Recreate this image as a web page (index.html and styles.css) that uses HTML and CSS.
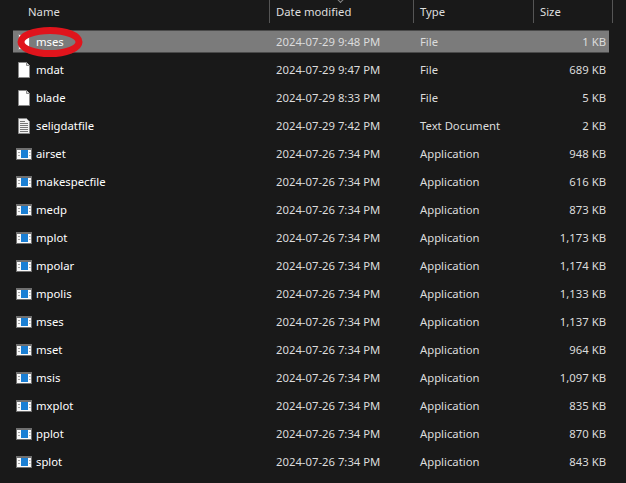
FILE: index.html
```html
<!DOCTYPE html>
<html lang="en">
<head>
<meta charset="utf-8">
<title>Files</title>
<link rel="stylesheet" href="styles.css">
</head>
<body>
<svg width="0" height="0" class="defs">
  <defs>
    <symbol id="doc" viewBox="0 0 16 16">
      <path d="M2.500 .5h8l3 3v12h-11z" fill="#fff" stroke="#8a8a8a"/>
      <path d="M10.500 .5v3h3" fill="#ddd" stroke="#8a8a8a"/>
    </symbol>
    <symbol id="txt" viewBox="0 0 16 16">
      <path d="M2.500 .5h8l3 3v12h-11z" fill="#f2f2f2" stroke="#8a8a8a"/>
      <path d="M4 3.500h5M4 5.500h8M4 7.500h8M4 9.500h8M4 11.500h8M4 13.500h8" stroke="#777"/>
    </symbol>
    <symbol id="app" viewBox="0 0 16 16">
      <rect y="2" width="16" height="12" fill="#707070"/>
      <rect x="1" y="4" width="14" height="9" fill="#fafafa"/>
      <rect x="5" y="4" width="7" height="8" fill="#1a7fd4"/>
      <path d="M2 6.500h2M2 9.500h2M13 6.500h1.500M13 9.500h1.500" stroke="#a8a8a8"/>
    </symbol>
  </defs>
</svg>
<main class="list">
  <header class="head">
    <div class="hcell hname">Name</div>
    <div class="hcell hdate">Date modified<span class="sort"></span></div>
    <div class="hcell htype">Type</div>
    <div class="hcell hsize">Size</div>
  </header>
  <div class="rows">
    <div class="row selected"><span class="name"><svg class="ico"><use href="#doc"/></svg>mses</span><span class="date">2024-07-29 9:48 PM</span><span>File</span><span class="size">1 KB</span></div>
    <div class="row"><span class="name"><svg class="ico"><use href="#doc"/></svg>mdat</span><span class="date">2024-07-29 9:47 PM</span><span>File</span><span class="size">689 KB</span></div>
    <div class="row"><span class="name"><svg class="ico"><use href="#doc"/></svg>blade</span><span class="date">2024-07-29 8:33 PM</span><span>File</span><span class="size">5 KB</span></div>
    <div class="row"><span class="name"><svg class="ico"><use href="#txt"/></svg>seligdatfile</span><span class="date">2024-07-29 7:42 PM</span><span>Text Document</span><span class="size">2 KB</span></div>
    <div class="row"><span class="name"><svg class="ico"><use href="#app"/></svg>airset</span><span class="date">2024-07-26 7:34 PM</span><span>Application</span><span class="size">948 KB</span></div>
    <div class="row"><span class="name"><svg class="ico"><use href="#app"/></svg>makespecfile</span><span class="date">2024-07-26 7:34 PM</span><span>Application</span><span class="size">616 KB</span></div>
    <div class="row"><span class="name"><svg class="ico"><use href="#app"/></svg>medp</span><span class="date">2024-07-26 7:34 PM</span><span>Application</span><span class="size">873 KB</span></div>
    <div class="row"><span class="name"><svg class="ico"><use href="#app"/></svg>mplot</span><span class="date">2024-07-26 7:34 PM</span><span>Application</span><span class="size">1,173 KB</span></div>
    <div class="row"><span class="name"><svg class="ico"><use href="#app"/></svg>mpolar</span><span class="date">2024-07-26 7:34 PM</span><span>Application</span><span class="size">1,174 KB</span></div>
    <div class="row"><span class="name"><svg class="ico"><use href="#app"/></svg>mpolis</span><span class="date">2024-07-26 7:34 PM</span><span>Application</span><span class="size">1,133 KB</span></div>
    <div class="row"><span class="name"><svg class="ico"><use href="#app"/></svg>mses</span><span class="date">2024-07-26 7:34 PM</span><span>Application</span><span class="size">1,137 KB</span></div>
    <div class="row"><span class="name"><svg class="ico"><use href="#app"/></svg>mset</span><span class="date">2024-07-26 7:34 PM</span><span>Application</span><span class="size">964 KB</span></div>
    <div class="row"><span class="name"><svg class="ico"><use href="#app"/></svg>msis</span><span class="date">2024-07-26 7:34 PM</span><span>Application</span><span class="size">1,097 KB</span></div>
    <div class="row"><span class="name"><svg class="ico"><use href="#app"/></svg>mxplot</span><span class="date">2024-07-26 7:34 PM</span><span>Application</span><span class="size">835 KB</span></div>
    <div class="row"><span class="name"><svg class="ico"><use href="#app"/></svg>pplot</span><span class="date">2024-07-26 7:34 PM</span><span>Application</span><span class="size">870 KB</span></div>
    <div class="row"><span class="name"><svg class="ico"><use href="#app"/></svg>splot</span><span class="date">2024-07-26 7:34 PM</span><span>Application</span><span class="size">843 KB</span></div>
  </div>
</main>
<svg class="circle" width="70" height="36" viewBox="0 0 70 36">
  <ellipse cx="35" cy="18" rx="29" ry="11.500" fill="none" stroke="#e0141c" stroke-width="7"/>
</svg>
</body>
</html>
```
FILE: styles.css
```css
* { box-sizing: border-box; }
html, body { margin: 0; height: 100%; }
body {
  background: #191919;
  color: #fff;
  font-family: "Noto Sans", "Open Sans", sans-serif;
  font-size: 11.300px;
  overflow: hidden;
  position: relative;
}
.defs { position: absolute; }
.list { display: flex; flex-direction: column; }
.head {
  display: grid;
  grid-template-columns: 269px 144px 120px 80px;
  height: 24px;
  color: #dedede;
}
.hcell {
  display: flex;
  align-items: center;
  height: 23px;
  position: relative;
  padding-left: 6px;
  border-left: 1px solid #555;
}
.hname { padding-left: 28px; border-left: 0; }
.hsize { border-right: 1px solid #555; }
.sort {
  position: absolute;
  left: 68px;
  top: -3px;
  width: 5px;
  height: 5px;
  border-right: 1px solid #888;
  border-bottom: 1px solid #888;
  transform: rotate(45deg);
}
.rows {
  display: flex;
  flex-direction: column;
  gap: 5px;
  margin-left: 13px;
  width: 596px;
  padding-top: 6px;
}
.row {
  display: grid;
  grid-template-columns: 263px 144px 1fr 72px;
  align-items: center;
  height: 23px;
  padding-right: 3px;
  color: #dcdcdc;
}
.selected {
  background: #7b7b7b;
  border: 1px solid #4a4a4a;
  border-width: 1px 0;
}
.name { display: flex; align-items: center; color: #fff; }
.ico { width: 16px; height: 16px; margin: 0 4px 0 3px; flex: none; }
.size { text-align: right; }
.circle { position: absolute; left: 15px; top: 24px; }
```
